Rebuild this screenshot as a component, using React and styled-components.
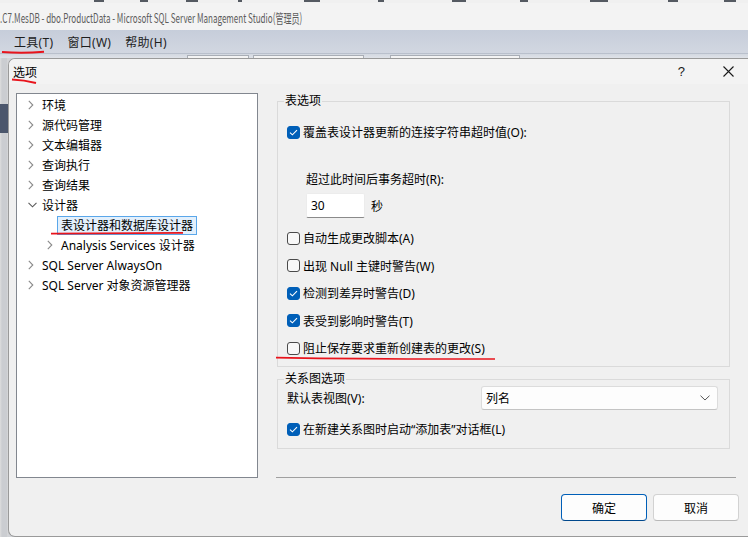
import React from 'react'
import styled, { createGlobalStyle } from 'styled-components'

const font = `"Noto Sans", "Noto Sans CJK SC", sans-serif`

const GlobalStyle = createGlobalStyle`
  html, body {
    margin: 0;
    padding: 0;
    background: #d2d4d8;
  }
  * {
    box-sizing: border-box;
  }
`

const treeItems = [
  { label: '环境', level: 0, arrow: 'right' },
  { label: '源代码管理', level: 0, arrow: 'right' },
  { label: '文本编辑器', level: 0, arrow: 'right' },
  { label: '查询执行', level: 0, arrow: 'right' },
  { label: '查询结果', level: 0, arrow: 'right' },
  { label: '设计器', level: 0, arrow: 'down' },
  { label: '表设计器和数据库设计器', level: 1, arrow: null, selected: true },
  { label: 'Analysis Services 设计器', level: 1, arrow: 'right' },
  { label: 'SQL Server AlwaysOn', level: 0, arrow: 'right' },
  { label: 'SQL Server 对象资源管理器', level: 0, arrow: 'right' },
]

const tableChecks = [
  { label: '自动生成更改脚本(A)', checked: false },
  { label: '出现 Null 主键时警告(W)', checked: false },
  { label: '检测到差异时警告(D)', checked: true },
  { label: '表受到影响时警告(T)', checked: true },
  { label: '阻止保存要求重新创建表的更改(S)', checked: false },
]

const topMarks = [
  [94, 10], [140, 8], [186, 12], [238, 4], [304, 16], [378, 6], [452, 14], [520, 8], [590, 18], [668, 10], [724, 12],
]

const Chevron = ({ dir }) => (
  <ChevronBox>
    {dir === 'down' ? (
      <svg width="9" height="6" viewBox="0 0 9 6">
        <path d="M0.5 0.8 L4.5 4.8 L8.5 0.8" fill="none" stroke="#5a5a5a" strokeWidth="1.1" />
      </svg>
    ) : (
      <svg width="6" height="10" viewBox="0 0 6 10">
        <path d="M0.8 0.8 L4.8 5 L0.8 9.2" fill="none" stroke="#8a8a8a" strokeWidth="1.1" />
      </svg>
    )}
  </ChevronBox>
)

const Check = ({ checked }) => (
  <Box $checked={checked}>
    {checked && (
      <svg width="9" height="7" viewBox="0 0 9 7">
        <path d="M1 3.6 L3.4 5.8 L8 1.2" fill="none" stroke="#ffffff" strokeWidth="1.1" />
      </svg>
    )}
  </Box>
)

const App = () => {
  return (
    <>
      <GlobalStyle />
      <Screen>
        <TopStrip>
          {topMarks.map(([x, w]) => (
            <Mark key={x} style={{ left: x, width: w }} />
          ))}
        </TopStrip>
        <TitleBar>
          <TitleText>.C7.MesDB - dbo.ProductData - Microsoft SQL Server Management Studio(管理员)</TitleText>
        </TitleBar>
        <MenuBar>
          <MenuItem>工具(T)</MenuItem>
          <MenuItem>窗口(W)</MenuItem>
          <MenuItem>帮助(H)</MenuItem>
        </MenuBar>
        <Workspace>
          <ToolStrip>
            <ToolBox $w={62} $ml={187} />
            <ToolBox $w={111} $ml={4} />
            <ToolBox $w={130} $ml={26} />
          </ToolStrip>
          <SideStrip>
            <SidePanel />
          </SideStrip>
          <Dialog>
            <DialogTitle>
              <span>选项</span>
              <TitleButtons>
                <HelpGlyph>?</HelpGlyph>
                <svg width="11" height="11" viewBox="0 0 11 11">
                  <path d="M0.5 0.5 L10.5 10.5 M10.5 0.5 L0.5 10.5" stroke="#1a1a1a" strokeWidth="1.1" />
                </svg>
              </TitleButtons>
            </DialogTitle>
            <DialogBody>
              <Main>
                <Tree>
                  {treeItems.map((item) => (
                    <TreeRow key={item.label} $level={item.level}>
                      {item.arrow ? <Chevron dir={item.arrow} /> : <ChevronBox />}
                      <TreeLabel $selected={item.selected}>{item.label}</TreeLabel>
                    </TreeRow>
                  ))}
                </Tree>
                <Options>
                  <Group>
                    <Legend>表选项</Legend>
                    <CheckRow $mt={14}>
                      <Check checked />
                      <span>覆盖表设计器更新的连接字符串超时值(O):</span>
                    </CheckRow>
                    <IndentLabel>超过此时间后事务超时(R):</IndentLabel>
                    <InputRow>
                      <NumberInput>30</NumberInput>
                      <span>秒</span>
                    </InputRow>
                    <CheckList>
                      {tableChecks.map((c) => (
                        <CheckRow key={c.label}>
                          <Check checked={c.checked} />
                          <span>{c.label}</span>
                        </CheckRow>
                      ))}
                    </CheckList>
                  </Group>
                  <Group $mt={5} $pb={9}>
                    <Legend>关系图选项</Legend>
                    <SelectRow>
                      <span>默认表视图(V):</span>
                      <Select>
                        <span>列名</span>
                        <svg width="10" height="6" viewBox="0 0 10 6">
                          <path d="M0.5 0.7 L5 5 L9.5 0.7" fill="none" stroke="#555" strokeWidth="1" />
                        </svg>
                      </Select>
                    </SelectRow>
                    <CheckRow $mt={9}>
                      <Check checked />
                      <span>在新建关系图时启动“添加表”对话框(L)</span>
                    </CheckRow>
                  </Group>
                  <Separator />
                </Options>
              </Main>
              <Footer>
                <Button $primary>确定</Button>
                <Button>取消</Button>
              </Footer>
            </DialogBody>
          </Dialog>
        </Workspace>
        <Marks width="748" height="537" viewBox="0 0 748 537">
          <path d="M2 52 Q 22 53.6 44 51.8" stroke="#e8141c" strokeWidth="2" fill="none" />
          <path d="M12 79.5 Q 24 80 36 83" stroke="#e8141c" strokeWidth="2" fill="none" />
          <path d="M51 233.6 L183 232.8" stroke="#e8141c" strokeWidth="1.8" fill="none" />
          <path d="M276 357.6 Q 380 359.4 495 359" stroke="#e8141c" strokeWidth="1.6" fill="none" />
        </Marks>
      </Screen>
    </>
  )
}

export default App

// STYLES
const Screen = styled.div`
  position: relative;
  width: 748px;
  height: 537px;
  overflow: hidden;
  display: flex;
  flex-direction: column;
  background: #d2d4d8;
  font-family: ${font};
  font-size: 12px;
  color: #1a1a1a;
`

const TopStrip = styled.div`
  position: relative;
  height: 3px;
  background: #f0f0f0;
`

const Mark = styled.span`
  position: absolute;
  top: 0;
  height: 2px;
  background: #555a62;
`

const TitleBar = styled.div`
  height: 27px;
  display: flex;
  align-items: center;
  background: #f3f3f3;
  overflow: hidden;
  white-space: nowrap;
`

const TitleText = styled.span`
  display: inline-block;
  font-family: "Noto Sans CJK SC", sans-serif;
  font-size: 13px;
  color: #5c5c5c;
  transform: scaleX(0.62);
  transform-origin: left center;
  margin-top: 1px;
`

const MenuBar = styled.div`
  height: 23px;
  display: flex;
  align-items: center;
  gap: 14px;
  padding-left: 14px;
  background: linear-gradient(#c6cdda, #d2d7e1);
`

const MenuItem = styled.span`
  font-size: 12px;
  letter-spacing: 0.3px;
  color: #1e1e1e;
`

const Workspace = styled.div`
  flex: 1;
  display: grid;
  grid-template-columns: 8px 1fr;
  grid-template-rows: 5px 1fr;
  min-height: 0;
`

const ToolStrip = styled.div`
  grid-column: 1 / 3;
  display: flex;
  align-items: flex-end;
  background: linear-gradient(#d3d8e1, #dfe2e8);
  border-top: 1px solid #b9c0cc;
`

const ToolBox = styled.span`
  width: ${(p) => p.$w}px;
  margin-left: ${(p) => p.$ml}px;
  height: 3px;
  background: #f4f4f4;
  border: 1px solid #a9aeb6;
  border-bottom: none;
`

const SideStrip = styled.div`
  display: flex;
  flex-direction: column;
  background: linear-gradient(90deg, #dedede 0, #cbcdd1 2px, #cbcdd1 7px, #dcdcdc 8px);
`

const SidePanel = styled.div`
  margin-top: 46px;
  height: 29px;
  background: #4b566c;
`

const Dialog = styled.div`
  width: 745px;
  display: flex;
  flex-direction: column;
  background: #f0f0f0;
  border: 1px solid #9a9a9a;
  border-right: none;
  border-radius: 7px 0 0 7px;
  overflow: hidden;
`

const DialogTitle = styled.div`
  height: 25px;
  flex-shrink: 0;
  display: flex;
  align-items: center;
  padding-left: 4px;
  background: #f3f3f3;
  font-size: 12px;
  color: #000;
`

const TitleButtons = styled.div`
  margin-left: auto;
  display: flex;
  align-items: center;
  margin-right: 19px;
  gap: 38px;
`

const HelpGlyph = styled.span`
  font-family: "Liberation Sans", sans-serif;
  font-size: 13px;
  color: #1a1a1a;
`

const DialogBody = styled.div`
  flex: 1;
  display: flex;
  flex-direction: column;
  padding: 9px 14px 0 7px;
`

const Main = styled.div`
  display: grid;
  grid-template-columns: 242px 462px;
  column-gap: 18px;
  height: 385px;
`

const Tree = styled.div`
  background: #ffffff;
  border: 1px solid #82878f;
  padding-top: 1px;
`

const TreeRow = styled.div`
  height: 20px;
  display: flex;
  align-items: center;
  padding-left: ${(p) => 11 + p.$level * 19}px;
  white-space: nowrap;
`

const ChevronBox = styled.span`
  width: 14px;
  display: flex;
  align-items: center;
`

const TreeLabel = styled.span`
  color: #000;
  ${(p) =>
    p.$selected &&
    `
    margin-left: -4px;
    padding: 0 3px;
    height: 19px;
    line-height: 17px;
    background: #e3f0fc;
    border: 1px solid #5aa7ea;
  `}
`

const Options = styled.div`
  display: flex;
  flex-direction: column;
`

const Group = styled.fieldset`
  margin: ${(p) => p.$mt || 1}px 8px 0 1px;
  padding: 0 9px ${(p) => (p.$pb !== undefined ? p.$pb : 8)}px;
  border: 1px solid #dadada;
  min-width: 0;
`

const Legend = styled.legend`
  margin-left: -3px;
  padding: 0 1px;
  line-height: 14px;
  font-size: 12px;
  color: #000;
`

const CheckRow = styled.div`
  height: 20px;
  margin-top: ${(p) => p.$mt || 0}px;
  display: flex;
  align-items: center;
  gap: 3px;
  color: #000;
  white-space: nowrap;
`

const Box = styled.span`
  width: 13px;
  height: 13px;
  flex-shrink: 0;
  display: flex;
  align-items: center;
  justify-content: center;
  border-radius: 3px;
  border: 1px solid ${(p) => (p.$checked ? '#005fb8' : '#4a4a4a')};
  background: ${(p) => (p.$checked ? '#005fb8' : '#f8f8f8')};
`

const IndentLabel = styled.div`
  height: 20px;
  margin-top: 27px;
  padding-left: 19px;
  display: flex;
  align-items: center;
  color: #000;
`

const InputRow = styled.div`
  height: 25px;
  margin-top: 4px;
  padding-left: 19px;
  display: flex;
  align-items: center;
  gap: 6px;
  color: #000;
`

const NumberInput = styled.div`
  width: 59px;
  height: 25px;
  padding-left: 4px;
  display: flex;
  align-items: center;
  background: #ffffff;
  border: 1px solid #ececec;
  border-bottom: 1px solid #8a8a8a;
  border-radius: 2px;
`

const CheckList = styled.div`
  margin-top: 10px;
  display: flex;
  flex-direction: column;
  gap: 7.5px;
`

const SelectRow = styled.div`
  height: 24px;
  display: grid;
  grid-template-columns: 194px 237px;
  align-items: center;
  color: #000;
`

const Select = styled.div`
  height: 24px;
  display: flex;
  align-items: center;
  justify-content: space-between;
  padding: 0 7px 0 4px;
  background: #fdfdfd;
  border: 1px solid #dcdcdc;
  border-bottom-color: #c4c4c4;
  border-radius: 3px;
`

const Separator = styled.div`
  margin-top: auto;
  height: 1px;
  width: 460px;
  background: #a0a0a0;
`

const Footer = styled.div`
  margin-top: 16px;
  display: flex;
  justify-content: flex-end;
  gap: 6px;
`

const Button = styled.button`
  width: 86px;
  height: 27px;
  font-family: ${font};
  font-size: 12px;
  color: #000;
  background: #fdfdfd;
  border: 1px solid ${(p) => (p.$primary ? '#005fb8' : '#d2d2d2')};
  border-bottom-color: ${(p) => (p.$primary ? '#00488c' : '#b8b8b8')};
  border-radius: 4px;
  padding: 0;
`

const Marks = styled.svg`
  position: absolute;
  top: 0;
  left: 0;
  pointer-events: none;
`
